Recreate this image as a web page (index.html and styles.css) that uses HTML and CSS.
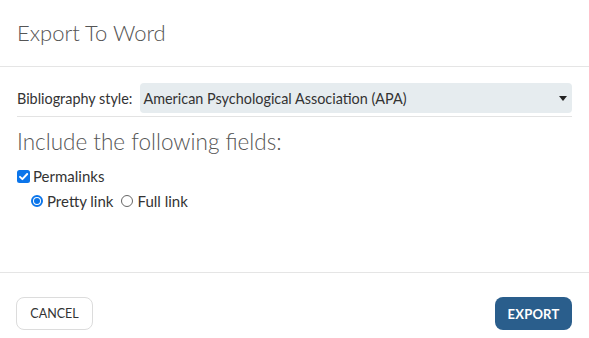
FILE: index.html
```html
<!DOCTYPE html>
<html>
<head>
<meta charset="utf-8">
<link rel="stylesheet" href="styles.css">
</head>
<body>
<div class="dialog">
  <header class="head">
    <h1 class="title">Export To Word</h1>
  </header>
  <main class="content">
    <div class="style-row">
      <label class="style-label">Bibliography style:</label>
      <div class="select">
        <span class="select-text">American Psychological Association (APA)</span>
        <svg class="caret" width="8" height="5" viewBox="0 0 8 5"><path d="M0 0h8L4 5z" fill="#222"/></svg>
      </div>
    </div>
    <h2 class="fields-title">Include the following fields:</h2>
    <div class="check-row">
      <span class="checkbox">
        <svg width="13" height="13" viewBox="0 0 13 13"><rect width="13" height="13" rx="2.5" fill="#0b75ea"/><path d="M3 6.8l2.4 2.4L10.2 4" fill="none" stroke="#fff" stroke-width="1.9" stroke-linecap="round" stroke-linejoin="round"/></svg>
      </span>
      <span class="opt-label">Permalinks</span>
    </div>
    <div class="radio-row">
      <span class="radio on"></span><span class="opt-label">Pretty link</span>
      <span class="radio"></span><span class="opt-label">Full link</span>
    </div>
  </main>
  <footer class="foot">
    <button class="btn cancel">CANCEL</button>
    <button class="btn export">EXPORT</button>
  </footer>
</div>
</body>
</html>
```
FILE: styles.css
```css
html, body { margin: 0; padding: 0; background: #fff; }
body { font-family: "Lato", "Open Sans", sans-serif; color: #333; }
.dialog { width: 589px; height: 338px; display: flex; flex-direction: column; }
.head { height: 67px; border-bottom: 1px solid #e5e5e5; box-sizing: border-box; display: flex; align-items: center; padding: 0 17px 1px; }
.title { margin: 0; font-weight: 300; font-size: 22px; color: #555; }
.content { flex: 1; padding: 16px 17px 0; border-bottom: 1px solid #e5e5e5; }
.style-row { display: flex; align-items: center; gap: 8px; padding-bottom: 3px; border-bottom: 1px solid #e3e3e3; }
.style-label { font-size: 14.4px; color: #333; }
.select { flex: 1; height: 30px; background: #e6ecef; border-radius: 4px; display: flex; align-items: center; justify-content: space-between; padding: 0 5px 0 3px; }
.select-text { font-size: 14.4px; color: #333; }
.caret { display: block; }
.fields-title { margin: 11px 0 0; font-weight: 300; font-size: 22.5px; color: #555; }
.check-row { display: flex; align-items: center; gap: 3px; margin-top: 12px; }
.checkbox svg { display: block; }
.opt-label { font-size: 15px; color: #333; }
.radio-row { display: flex; align-items: center; margin-top: 7px; padding-left: 14px; }
.radio { width: 12px; height: 12px; border: 1px solid #666; border-radius: 50%; box-sizing: border-box; margin-right: 4px; position: relative; }
.radio.on { border: 2px solid #0b75ea; }
.radio.on::after { content: ""; position: absolute; left: 1px; top: 1px; width: 6px; height: 6px; border-radius: 50%; background: #0b75ea; }
.radio-row .opt-label { margin-right: 8px; }
.foot { height: 65px; display: flex; align-items: flex-start; justify-content: space-between; padding: 24px 17px 0 16px; box-sizing: border-box; }
.btn { height: 33px; width: 77px; border-radius: 8px; font-family: inherit; cursor: pointer; padding: 0; }
.cancel { background: #fff; border: 1px solid #dcdcdc; color: #333; font-weight: 400; font-size: 12.5px; letter-spacing: 0; }
.export { background: #2a5e8c; border: none; color: #fff; font-weight: 700; font-size: 13px; letter-spacing: 0.2px; }
```
